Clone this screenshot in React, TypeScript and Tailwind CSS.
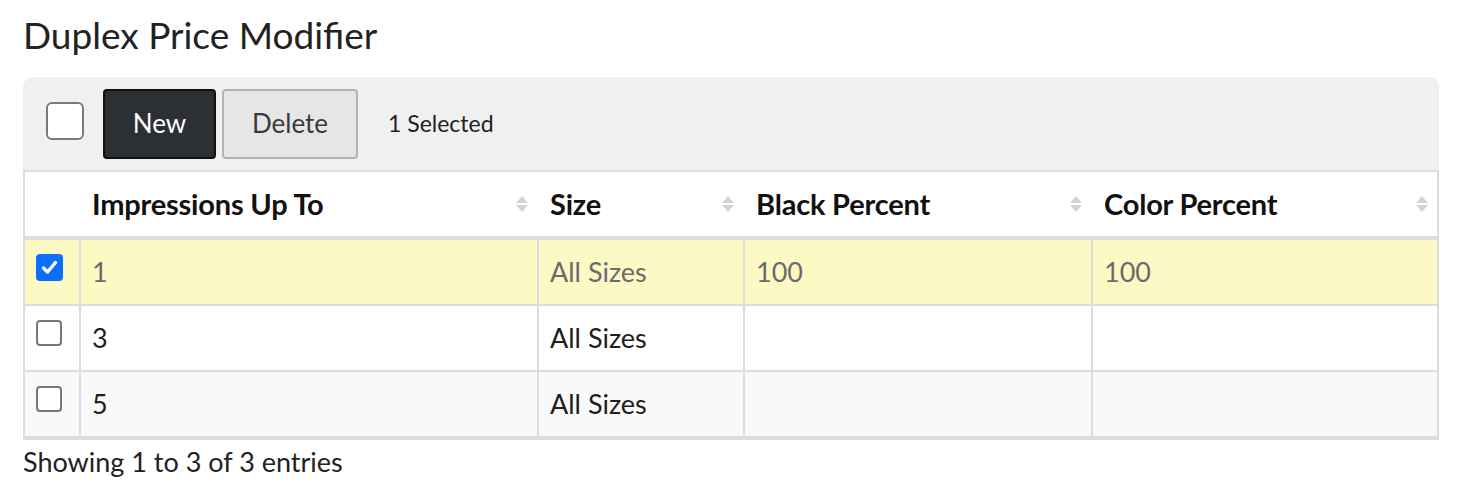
import React from "react";

type Row = {
  id: number;
  upTo: string;
  size: string;
  black: string;
  color: string;
};

const rows: Row[] = [
  { id: 1, upTo: "1", size: "All Sizes", black: "100", color: "100" },
  { id: 2, upTo: "3", size: "All Sizes", black: "", color: "" },
  { id: 3, upTo: "5", size: "All Sizes", black: "", color: "" },
];

const columns = ["Impressions Up To", "Size", "Black Percent", "Color Percent"];

function SortIcon() {
  return (
    <svg width="14" height="18" viewBox="0 0 14 18" className="shrink-0">
      <polygon points="1,8 7,1 13,8" fill="#d3d3d3" />
      <polygon points="1,10 7,17 13,10" fill="#d3d3d3" />
    </svg>
  );
}

function CheckBox({ checked }: { checked: boolean }) {
  if (checked) {
    return (
      <div className="w-[27px] h-[27px] rounded-[4px] bg-[#0b6efd] flex items-center justify-center">
        <svg width="19" height="19" viewBox="0 0 19 19">
          <path
            d="M3.5 10 L7.5 14 L15.5 4.5"
            fill="none"
            stroke="#fff"
            strokeWidth="3.4"
            strokeLinecap="round"
            strokeLinejoin="round"
          />
        </svg>
      </div>
    );
  }
  return (
    <div className="w-[26px] h-[26px] rounded-[4px] border-2 border-[#777] bg-white" />
  );
}

export default function App() {
  const selected = 1;

  return (
    <div
      className="w-[1476px] h-[483px] bg-white text-[#212121]"
      style={{ fontFamily: "Lato, 'Noto Sans', sans-serif" }}
    >
      <div className="ml-[23px] w-[1416px]">
        <div className="h-[77px] pt-[13px]">
          <h1 className="text-[37px] leading-[44px] text-[#222]">
            Duplex Price Modifier
          </h1>
        </div>

        {/* toolbar */}
        <div className="h-[93px] bg-[#f0f0f0] rounded-t-[10px] flex items-center pl-[23px]">
          <div className="w-[38px] h-[38px] rounded-[6px] border-2 border-[#7a7a7a] bg-white mb-[6px]" />
          <button className="ml-[19px] w-[113px] h-[70px] rounded-[4px] border-2 border-[#111] bg-[#2c3034] text-white text-[26px]">
            New
          </button>
          <button className="ml-[6px] w-[136px] h-[70px] rounded-[4px] border-2 border-[#b3b3b3] bg-[#e6e6e6] text-[#3a3a3a] text-[26px]">
            Delete
          </button>
          <span className="ml-[30px] text-[23px] text-[#222]">1 Selected</span>
        </div>

        {/* table */}
        <div className="border-2 border-b-4 border-[#ddd]">
          <div className="grid grid-cols-[54px_458px_206px_348px_346px] h-[68px] border-b-4 border-[#ddd] bg-white">
            <div />
            {columns.map((c) => (
              <div
                key={c}
                className="flex items-center justify-between pl-[11px] pr-[8px] border-l-2 border-white"
              >
                <span className="text-[29px] font-bold text-[#111] tracking-[-0.2px]">{c}</span>
                <SortIcon />
              </div>
            ))}
          </div>

          {rows.map((r, i) => {
            const isSel = r.id === selected;
            const bg = isSel ? "bg-[#fdf9c5]" : i % 2 === 0 ? "bg-[#f9f9f9]" : "bg-white";
            const txt = isSel ? "text-[#6b6b6b]" : "text-[#1e1e1e]";
            const last = i === rows.length - 1;
            return (
              <div
                key={r.id}
                className={`grid grid-cols-[54px_458px_206px_348px_346px] ${
                  last ? "h-[64px]" : "h-[66px] border-b-2 border-[#ddd]"
                } ${bg} ${txt}`}
              >
                <div className="pl-[11px] pt-[14px]">
                  <CheckBox checked={isSel} />
                </div>
                {[r.upTo, r.size, r.black, r.color].map((v, j) => (
                  <div
                    key={j}
                    className="flex items-center pl-[11px] border-l-2 border-[#ddd] text-[27px]"
                  >
                    {v}
                  </div>
                ))}
              </div>
            );
          })}
        </div>

        <div className="mt-[5px] text-[27px] leading-[34px] text-[#222]">
          Showing 1 to 3 of 3 entries
        </div>
      </div>
    </div>
  );
}
